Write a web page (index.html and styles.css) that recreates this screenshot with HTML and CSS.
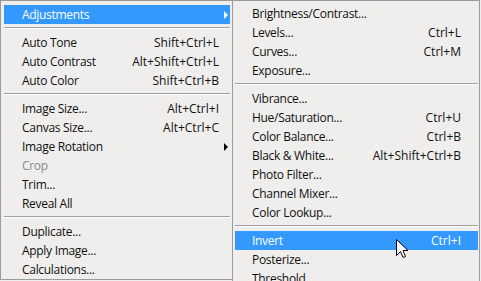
FILE: index.html
```html
<!DOCTYPE html>
<html lang="en">
<head>
    <meta charset="UTF-8">
    <title>Image menu</title>
    <link rel="stylesheet" href="styles.css">
</head>
<body>
    <div class="stage">
        <ul class="menu main">
            <li class="item active has-sub"><span>Adjustments</span></li>
            <li class="sep"></li>
            <li class="item"><span>Auto Tone</span><kbd>Shift+Ctrl+L</kbd></li>
            <li class="item"><span>Auto Contrast</span><kbd>Alt+Shift+Ctrl+L</kbd></li>
            <li class="item"><span>Auto Color</span><kbd>Shift+Ctrl+B</kbd></li>
            <li class="sep"></li>
            <li class="item"><span>Image Size...</span><kbd>Alt+Ctrl+I</kbd></li>
            <li class="item"><span>Canvas Size...</span><kbd>Alt+Ctrl+C</kbd></li>
            <li class="item has-sub"><span>Image Rotation</span></li>
            <li class="item disabled"><span>Crop</span></li>
            <li class="item"><span>Trim...</span></li>
            <li class="item"><span>Reveal All</span></li>
            <li class="sep"></li>
            <li class="item"><span>Duplicate...</span></li>
            <li class="item"><span>Apply Image...</span></li>
            <li class="item"><span>Calculations...</span></li>
        </ul>

        <ul class="menu sub">
            <li class="item"><span>Brightness/Contrast...</span></li>
            <li class="item"><span>Levels...</span><kbd>Ctrl+L</kbd></li>
            <li class="item"><span>Curves...</span><kbd>Ctrl+M</kbd></li>
            <li class="item"><span>Exposure...</span></li>
            <li class="sep"></li>
            <li class="item"><span>Vibrance...</span></li>
            <li class="item"><span>Hue/Saturation...</span><kbd>Ctrl+U</kbd></li>
            <li class="item"><span>Color Balance...</span><kbd>Ctrl+B</kbd></li>
            <li class="item"><span>Black &amp; White...</span><kbd>Alt+Shift+Ctrl+B</kbd></li>
            <li class="item"><span>Photo Filter...</span></li>
            <li class="item"><span>Channel Mixer...</span></li>
            <li class="item"><span>Color Lookup...</span></li>
            <li class="sep"></li>
            <li class="item active"><span>Invert</span><kbd>Ctrl+I</kbd></li>
            <li class="item"><span>Posterize...</span></li>
            <li class="item"><span>Threshold...</span></li>
        </ul>

        <svg class="cursor" width="13" height="21" viewBox="0 0 13 21">
            <path d="M0.5 0.5 L0.5 16.5 L4.5 12.5 L7 18.5 L9.5 17.5 L7 11.5 L12 11.5 Z" fill="#fff" stroke="#000" stroke-width="1" stroke-linejoin="miter"/>
        </svg>
    </div>
</body>
</html>
```

FILE: styles.css
```css
html, body {
    margin: 0;
    height: 100%;
    overflow: hidden;
    background-color: #efeeec;
}

.stage {
    position: relative;
    display: flex;
    align-items: flex-start;
    font-family: "Open Sans", "Noto Sans", sans-serif;
    font-size: 12px;
    color: #111;
}

.menu {
    list-style: none;
    margin: 0;
    background-color: #efeeec;
    border: 1px solid #9a9a9a;
}

.main {
    width: 226px;
    padding: 4px 2px 0 3px;
    height: 274px;
}

.sub {
    width: 243px;
    margin-left: -1px;
    padding: 3px 1px 0 2px;
    height: 300px;
}

.item {
    position: relative;
    display: flex;
    justify-content: space-between;
    align-items: center;
    height: 19px;
    white-space: nowrap;
}

.item span {
    letter-spacing: -0.3px;
}

.main .item {
    padding: 0 11px 0 18px;
}

.sub .item {
    padding: 0 17px 0 17px;
}

.item kbd {
    font-family: inherit;
    font-size: inherit;
}

.item.active {
    background-color: #3399ff;
    color: #fff;
}

.item.disabled {
    color: #8c8c8c;
}

.has-sub::after {
    content: "";
    position: absolute;
    right: 2px;
    top: 6px;
    border-left: 4px solid #000;
    border-top: 4px solid transparent;
    border-bottom: 4px solid transparent;
}

.has-sub.active::after {
    border-left-color: #fff;
}

.sep {
    height: 9px;
    box-sizing: border-box;
    padding-top: 3px;
}

.sep::before {
    content: "";
    display: block;
    border-top: 1px solid #a0a0a0;
    border-bottom: 1px solid #fff;
}

.cursor {
    position: absolute;
    left: 396px;
    top: 239px;
}
```
